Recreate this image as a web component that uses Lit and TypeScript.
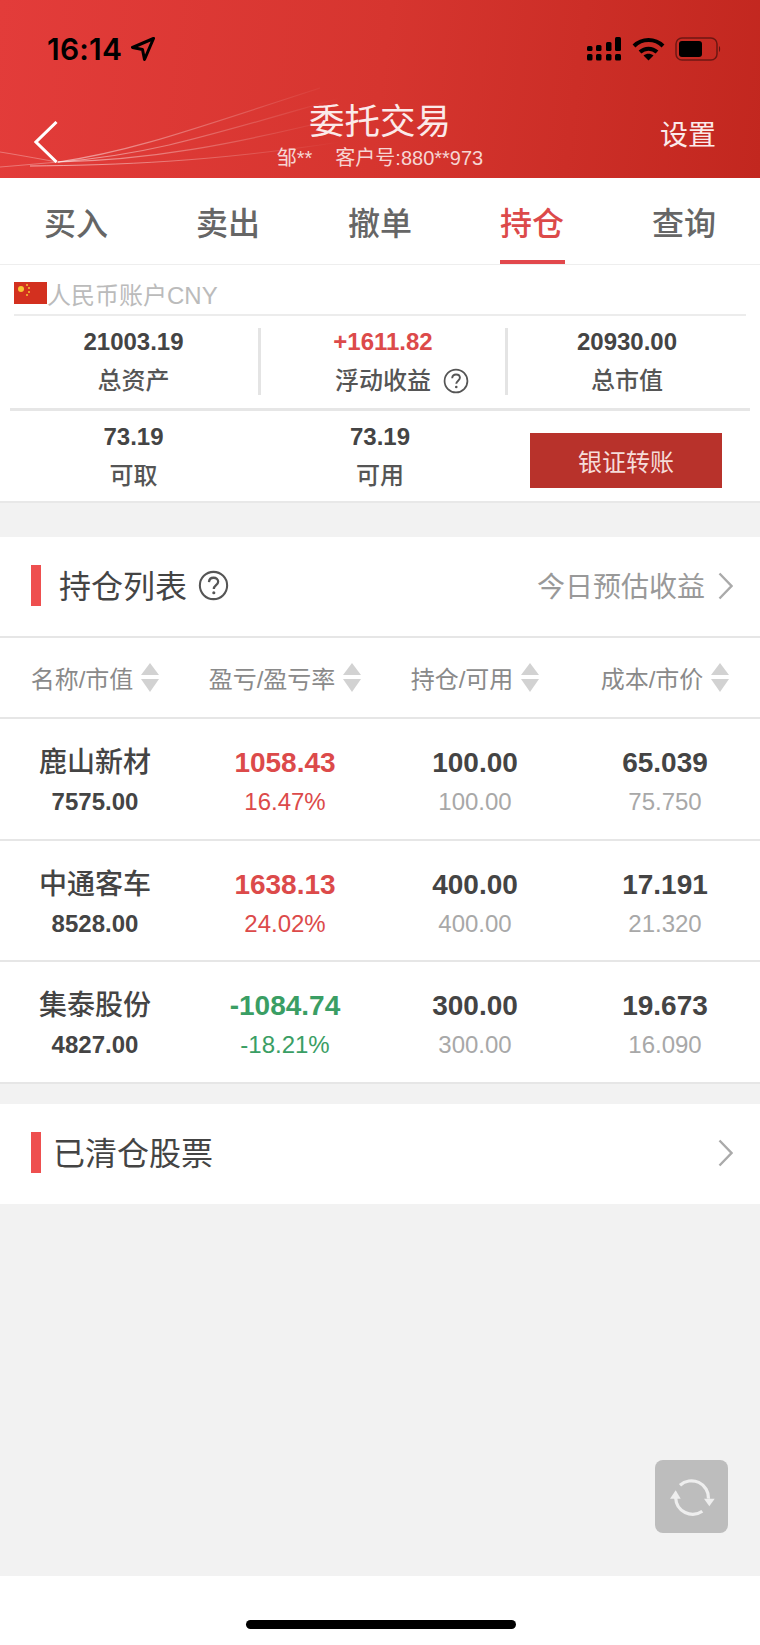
import { LitElement, html, css, svg } from "lit";
import { customElement } from "lit/decorators.js";

const help = (s: number) => html`<svg class="help" width=${s} height=${s} viewBox="0 0 30 30"><circle cx="15" cy="15" r="13.2" fill="none" stroke="#555" stroke-width="2"/><path d="M10.6 11.800c.2-2.800 2-4.300 4.500-4.300 2.600 0 4.400 1.600 4.400 3.800 0 3.200-4.200 3.500-4.200 7" fill="none" stroke="#555" stroke-width="2.200"/><circle cx="15.300" cy="22" r="1.500" fill="#555"/></svg>`;
const chevron = html`<svg width="15" height="28" viewBox="0 0 15 28"><path d="M1.500 1.500L13.500 14L1.500 26.500" fill="none" stroke="#aaa" stroke-width="2.400"/></svg>`;
const sort = html`<svg class="sort" width="18" height="29" viewBox="0 0 18 29"><path d="M9 0L18 12H0z" fill="#d2d2d2"/><path d="M0 16H18L9 29z" fill="#d2d2d2"/></svg>`;

const rows = [
  { n: "鹿山新材", mv: "7575.00", p: "1058.43", r: "16.47%", q: "100.00", a: "100.00", c: "65.039", m: "75.750", up: true },
  { n: "中通客车", mv: "8528.00", p: "1638.13", r: "24.02%", q: "400.00", a: "400.00", c: "17.191", m: "21.320", up: true },
  { n: "集泰股份", mv: "4827.00", p: "-1084.74", r: "-18.21%", q: "300.00", a: "300.00", c: "19.673", m: "16.090", up: false },
];

@customElement("app-root")
export class AppRoot extends LitElement {
  static styles = css`
    :host { display: block; width: 760px; height: 1645px; position: relative; overflow: hidden; background: #fff;
      font-family: "Liberation Sans", "Noto Sans CJK SC", sans-serif; color: #444; }
    .head { height: 178px; position: relative; background: linear-gradient(97deg, #e33c3a 0%, #d6352f 50%, #c2271f 100%); display: flex; flex-direction: column; }
    .swoosh { position: absolute; left: 0; top: 0; }
    .status { height: 96px; padding: 32px 39px 0 47px; box-sizing: border-box; display: flex; align-items: flex-start; justify-content: space-between; position: relative; color: #000; }
    .time { font: 600 30px/34px Inter, "Liberation Sans", sans-serif; letter-spacing: 0.2px; display: flex; align-items: center; gap: 9px; }
    .sys { display: flex; align-items: center; gap: 10px; padding-top: 5px; }
    .nav { flex: 1; position: relative; display: grid; grid-template-columns: 152px 1fr 152px; color: #fff; }
    .back { padding: 25px 0 0 34px; }
    .titles { text-align: center; }
    .t1 { font-size: 35.500px; line-height: 50px; margin-top: 1px; color: #fbeaea; }
    .t2 { font-size: 20px; line-height: 26px; margin-top: -2px; color: #f6d5d3; display: flex; justify-content: center; gap: 23px; }
    .set { font-size: 28px; line-height: 40px; text-align: right; padding: 20px 44px 0 0; color: #fbeaea; white-space: nowrap; }
    .tabs { height: 87px; display: grid; grid-template-columns: repeat(5, 152px); border-bottom: 1px solid #eee; box-sizing: border-box; background: #fff; }
    .tab { font-size: 32px; font-weight: 500; color: #666; display: flex; align-items: center; justify-content: center; position: relative; }
    .tab.on { color: #dc4a4a; }
    .tab.on::after { content: ""; position: absolute; left: 44px; width: 65px; bottom: 0; height: 4px; background: #e2484c; }
    .acct { height: 238px; box-sizing: border-box; border-bottom: 2px solid #e8e8e8; }
    .lab { height: 51px; margin: 0 14px; box-sizing: border-box; border-bottom: 2px solid #ececec; display: flex; align-items: center; font-size: 24px; color: #bbb; padding-top: 7px; }
    .st { display: grid; grid-template-columns: 244px 247px 1fr; margin: 0 14px; height: 92px; padding-top: 12px; box-sizing: border-box; align-items: start; }
    .c { text-align: center; }
    .c.first { padding-right: 5px; }
    .c.d { border-left: 3px solid #e4e4e4; height: 67px; }
    .c.mid { padding-right: 3px; }
    .v { font-size: 24px; font-weight: 700; line-height: 28px; color: #444; }
    .l { font-size: 24px; line-height: 26px; margin-top: 12px; color: #555; font-weight: 500; display: flex; justify-content: center; align-items: center; }
    .l .help { margin: 0 -38px 0 12px; }
    .red { color: #dc4a4a; }
    .hr { height: 3px; margin: 0 10px; background: #e6e6e6; }
    .st2 { display: grid; grid-template-columns: 244px 247px 1fr; margin: 0 14px; height: 90px; padding-top: 12px; box-sizing: border-box; align-items: start; }
    .btn { width: 192px; height: 55px; margin: 10px 0 0 25px; background: #b8322b; color: #f5dcd9; font-size: 24px; display: flex; align-items: center; justify-content: center; }
    .gap1 { height: 34px; background: #f2f2f2; }
    .ptitle { height: 101px; box-sizing: border-box; border-bottom: 2px solid #e6e6e6; display: flex; align-items: center; padding: 0 27px 2px 31px; }
    .bar { width: 10px; height: 41px; background: #ee4f4f; margin-right: 18px; }
    .pt { font-size: 32px; color: #444; margin: -4px 11px 0 0; }
    .sp { flex: 1; }
    .est { font-size: 28px; color: #999; margin: -2px 13px 0 0; }
    .ths { height: 81px; box-sizing: border-box; border-bottom: 2px solid #e6e6e6; display: grid; grid-template-columns: repeat(4, 190px); align-items: center; }
    .th { display: flex; align-items: center; justify-content: center; gap: 8px; font-size: 24px; color: #8a8a8a; }
    .sort { display: block; }
    .row { height: 121.500px; box-sizing: border-box; border-bottom: 2px solid #e6e6e6; display: grid; grid-template-columns: repeat(4, 190px); grid-auto-rows: 39px; text-align: center; align-content: start; padding-top: 24px; }
    .a { font-size: 28px; font-weight: 700; line-height: 39px; color: #444; }
    .name { font-size: 28px; font-weight: 500; }
    .b { font-size: 24px; line-height: 39px; color: #a8a8a8; }
    .mv { color: #444; font-weight: 700; }
    .up { color: #dc4a4a; }
    .dn { color: #3a9e64; }
    .gap2 { height: 20.500px; background: #f2f2f2; }
    .clear { height: 100px; box-sizing: border-box; display: flex; align-items: center; padding: 0 27px 3px 31px; }
    .clear .bar { margin-right: 12px; }
    .fill { height: 372px; background: #f2f2f2; position: relative; }
    .float { position: absolute; left: 655px; top: 256px; width: 73px; height: 73px; border-radius: 8px; background: #bdbdbd; display: flex; align-items: center; justify-content: center; }
    .home { position: absolute; left: 246px; top: 1620px; width: 270px; height: 9px; border-radius: 5px; background: #000; }
  `;

  render() {
    return html`
      <div class="head">
        <svg class="swoosh" width="760" height="178" viewBox="0 0 760 178" fill="none" stroke="#fff">
          ${svg`
          <defs>
            <linearGradient id="fade" gradientUnits="userSpaceOnUse" x1="50" y1="0" x2="340" y2="0">
              <stop offset="0" stop-color="#fff" stop-opacity=".55"/><stop offset="1" stop-color="#fff" stop-opacity="0"/>
            </linearGradient>
          </defs>
          <path d="M58 162C130 152 190 130 320 88" stroke="url(#fade)" stroke-width="1.200"/>
          <path d="M58 162C150 155 210 135 340 98" stroke="url(#fade)" stroke-width="1.200"/>
          <path d="M58 162C150 160 230 145 340 118" stroke="url(#fade)" stroke-width="1.200"/>
          <path d="M30 166C120 165 210 162 340 142" stroke="url(#fade)" stroke-width="1"/>
          <path d="M0 152C25 156 45 160 58 162" stroke-opacity=".3" stroke-width="1"/>
          <path d="M0 167C25 165 45 163 60 162" stroke-opacity=".3" stroke-width="1"/>
          `}
        </svg>
        <div class="status">
          <div class="time">16:14
            <svg width="24" height="24" viewBox="0 0 24 24"><path d="M22.500 1.500L1.500 10.500L11.500 12.500L13.500 22.500Z" fill="none" stroke="#000" stroke-width="3" stroke-linejoin="round"/></svg>
          </div>
          <div class="sys">
            <svg width="35" height="24" viewBox="0 0 35 24" fill="#000">
              <rect x="0" y="9" width="5.500" height="5" rx="1.500"/><rect x="0" y="17" width="5.500" height="6.500" rx="1.500"/>
              <rect x="9" y="8" width="5.500" height="6" rx="1.500"/><rect x="9" y="17" width="5.500" height="6.500" rx="1.500"/>
              <rect x="19" y="5" width="5.500" height="9" rx="1.500"/><rect x="19" y="17" width="5.500" height="6.500" rx="1.500"/>
              <rect x="28" y="0" width="6" height="14" rx="1.500"/><rect x="28" y="17" width="6" height="6.500" rx="1.500"/>
            </svg>
            <svg width="33" height="24" viewBox="0 0 33 24"><path d="M2 9C10 1 23 1 31 9" fill="none" stroke="#000" stroke-width="4"/><path d="M8 15C13 10.500 20 10.500 25 15" fill="none" stroke="#000" stroke-width="4"/><path d="M11.500 18.500C14.500 16 18.500 16 21.500 18.500L16.500 23.500Z" fill="#000"/></svg>
            <svg width="46" height="24" viewBox="0 0 46 24"><rect x="1" y="1" width="41" height="22" rx="6" fill="none" stroke="#000" stroke-opacity=".45" stroke-width="1.500"/><rect x="4" y="4" width="23" height="16" rx="3" fill="#000"/><path d="M44 9c1.500.5 1.500 5.500 0 6z" fill="#000" fill-opacity=".5"/></svg>
          </div>
        </div>
        <div class="nav">
          <div class="back"><svg width="24" height="42" viewBox="0 0 24 42"><path d="M22.500 1L2 21L22.500 41" fill="none" stroke="#fff" stroke-width="3"/></svg></div>
          <div class="titles">
            <div class="t1">委托交易</div>
            <div class="t2"><span>邹**</span><span>客户号:880**973</span></div>
          </div>
          <div class="set">设置</div>
        </div>
      </div>

      <div class="tabs">
        <div class="tab">买入</div><div class="tab">卖出</div><div class="tab">撤单</div><div class="tab on">持仓</div><div class="tab">查询</div>
      </div>

      <div class="acct">
        <div class="lab">
          <svg width="33" height="22" viewBox="0 0 33 22"><rect width="33" height="22" fill="#d3301f"/><circle cx="7" cy="7" r="3" fill="#f6c532"/><circle cx="13" cy="3" r="1" fill="#f6c532"/><circle cx="15" cy="6" r="1" fill="#f6c532"/><circle cx="15" cy="10" r="1" fill="#f6c532"/><circle cx="13" cy="13" r="1" fill="#f6c532"/></svg>
          <span>人民币账户CNY</span>
        </div>
        <div class="st">
          <div class="c first"><div class="v">21003.19</div><div class="l">总资产</div></div>
          <div class="c d"><div class="v red">+1611.82</div><div class="l">浮动收益 ${help(26)}</div></div>
          <div class="c d"><div class="v">20930.00</div><div class="l">总市值</div></div>
        </div>
        <div class="hr"></div>
        <div class="st2">
          <div class="c first"><div class="v">73.19</div><div class="l">可取</div></div>
          <div class="c mid"><div class="v">73.19</div><div class="l">可用</div></div>
          <div class="btn">银证转账</div>
        </div>
      </div>

      <div class="gap1"></div>

      <div class="ptitle">
        <div class="bar"></div><div class="pt">持仓列表</div>${help(31)}
        <div class="sp"></div>
        <div class="est">今日预估收益</div>${chevron}
      </div>
      <div class="ths">
        <div class="th">名称/市值${sort}</div>
        <div class="th">盈亏/盈亏率${sort}</div>
        <div class="th">持仓/可用${sort}</div>
        <div class="th">成本/市价${sort}</div>
      </div>
      ${rows.map(
        (r) => html`<div class="row">
          <div class="a name">${r.n}</div>
          <div class="a ${r.up ? "up" : "dn"}">${r.p}</div>
          <div class="a">${r.q}</div>
          <div class="a">${r.c}</div>
          <div class="b mv">${r.mv}</div>
          <div class="b ${r.up ? "up" : "dn"}">${r.r}</div>
          <div class="b">${r.a}</div>
          <div class="b">${r.m}</div>
        </div>`
      )}
      <div class="gap2"></div>
      <div class="clear">
        <div class="bar"></div><div class="pt">已清仓股票</div>
        <div class="sp"></div>${chevron}
      </div>
      <div class="fill">
        <div class="float">
          <svg width="46" height="46" viewBox="0 0 46 46" fill="none" stroke="#eee" stroke-width="3.200">
            <path d="M11 11.300A17 17 0 0 1 39.500 24.700"/>
            <path d="M33.300 37.300A17 17 0 0 1 6.700 24"/>
            <path d="M35 24.700H45.700L40.300 32.300Z" fill="#eee" stroke="none"/>
            <path d="M1 24.700H11.700L6.700 16.300Z" fill="#eee" stroke="none"/>
          </svg>
        </div>
      </div>
      <div class="home"></div>
    `;
  }
}
